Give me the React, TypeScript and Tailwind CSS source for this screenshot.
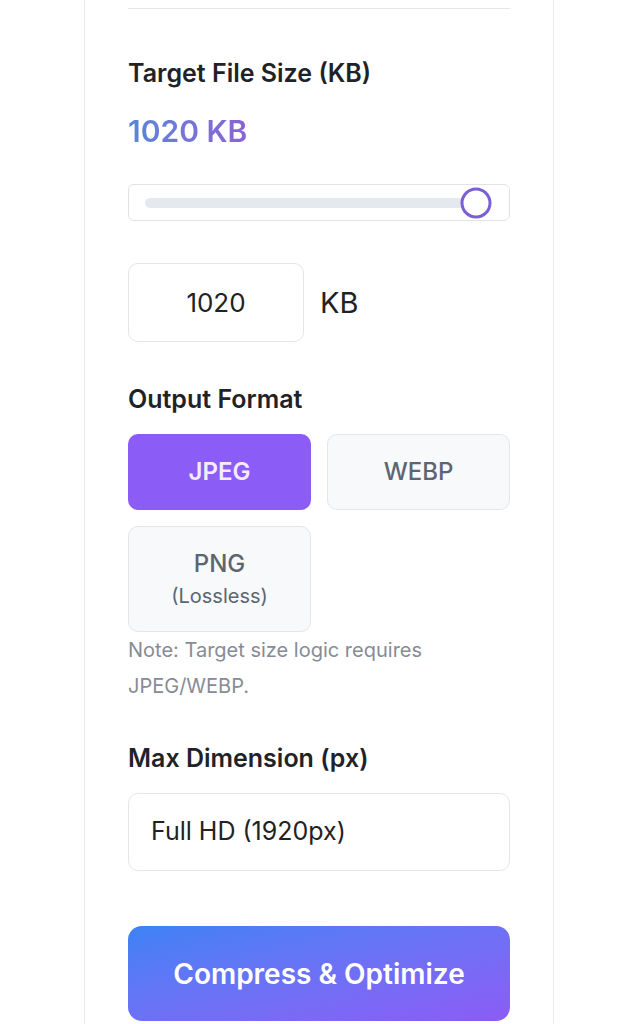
import * as React from "react"

const formats = [
    { id: "jpeg", label: "JPEG" },
    { id: "webp", label: "WEBP" },
    { id: "png", label: "PNG", sub: "(Lossless)" },
]

export default function App() {
    const [size, setSize] = React.useState(1020)
    const [format, setFormat] = React.useState("jpeg")
    const pct = (size / 1024) * 100

    return (
        <div className="min-h-screen bg-white font-['Inter',sans-serif] text-[#1f2328]">
            <div className="mx-auto w-[470px] border-x border-[#e6e9ee] bg-white px-[43px] pt-2 pb-8">
                <div className="h-px bg-[#e3e6ea]" />

                {/* Target size */}
                <h3 className="mt-[50px] text-[25px] font-semibold leading-[28px]">Target File Size (KB)</h3>
                <div className="mt-[27px] w-fit bg-gradient-to-r from-[#5786d8] to-[#8a62d8] bg-clip-text text-[30px] font-semibold leading-[34px] text-transparent">
                    {size} KB
                </div>

                <div className="mt-[36px] flex h-[37px] items-center rounded-md border border-[#dfe2e7] pl-[16px] pr-[32px]">
                    <div className="relative h-[10px] flex-1 rounded-full bg-[#e4e8ef]">
                        <div
                            className="absolute top-1/2 h-[31px] w-[31px] -translate-x-1/2 -translate-y-1/2 rounded-full border-[3px] border-[#7c5fd5] bg-white"
                            style={{ left: `${pct}%` }}
                        />
                    </div>
                </div>

                <div className="mt-[42px] flex items-center gap-[16px]">
                    <input
                        value={size}
                        onChange={(e) => setSize(Number(e.target.value) || 0)}
                        className="h-[79px] w-[176px] rounded-[10px] border border-[#e3e6ea] text-center text-[26px] text-[#222] outline-none"
                    />
                    <span className="text-[29px] text-[#222]">KB</span>
                </div>

                {/* Format */}
                <h3 className="mt-[43px] text-[25px] font-semibold leading-[28px]">Output Format</h3>
                <div className="mt-[21px] grid grid-cols-2 gap-[16px]">
                    {formats.map((f) => {
                        const active = format === f.id
                        return (
                            <button
                                key={f.id}
                                onClick={() => setFormat(f.id)}
                                className={
                                    active
                                        ? "flex h-[76px] flex-col items-center justify-center rounded-[10px] bg-[#8b5cf6] text-[24px] font-semibold text-[#f3ecff]"
                                        : f.sub
                                        ? "flex h-[106px] flex-col items-center justify-center rounded-[10px] border border-[#e3e6ea] bg-[#f8f9fb] text-[24px] font-medium text-[#5d6570]"
                                        : "flex h-[76px] flex-col items-center justify-center rounded-[10px] border border-[#e3e6ea] bg-[#f8f9fb] text-[24px] font-medium text-[#5d6570]"
                                }
                            >
                                <span className="leading-[28px]">{f.label}</span>
                                {f.sub && <span className="mt-[6px] text-[20px] font-normal leading-[24px]">{f.sub}</span>}
                            </button>
                        )
                    })}
                </div>
                <p className="text-[20px] leading-[36px] text-[#868c95]">Note: Target size logic requires JPEG/WEBP.</p>

                {/* Dimension */}
                <h3 className="mt-[40px] text-[25px] font-semibold leading-[28px]">Max Dimension (px)</h3>
                <div className="mt-[21px] flex h-[78px] items-center rounded-[10px] border border-[#e3e6ea] px-[22px] text-[25px] text-[#222]">
                    Full HD (1920px)
                </div>

                <button className="mt-[55px] flex h-[95px] w-full items-center justify-center rounded-[14px] bg-gradient-to-br from-[#3b82f6] to-[#8b5cf6] text-[28px] font-semibold text-white">
                    Compress &amp; Optimize
                </button>
            </div>
        </div>
    )
}
